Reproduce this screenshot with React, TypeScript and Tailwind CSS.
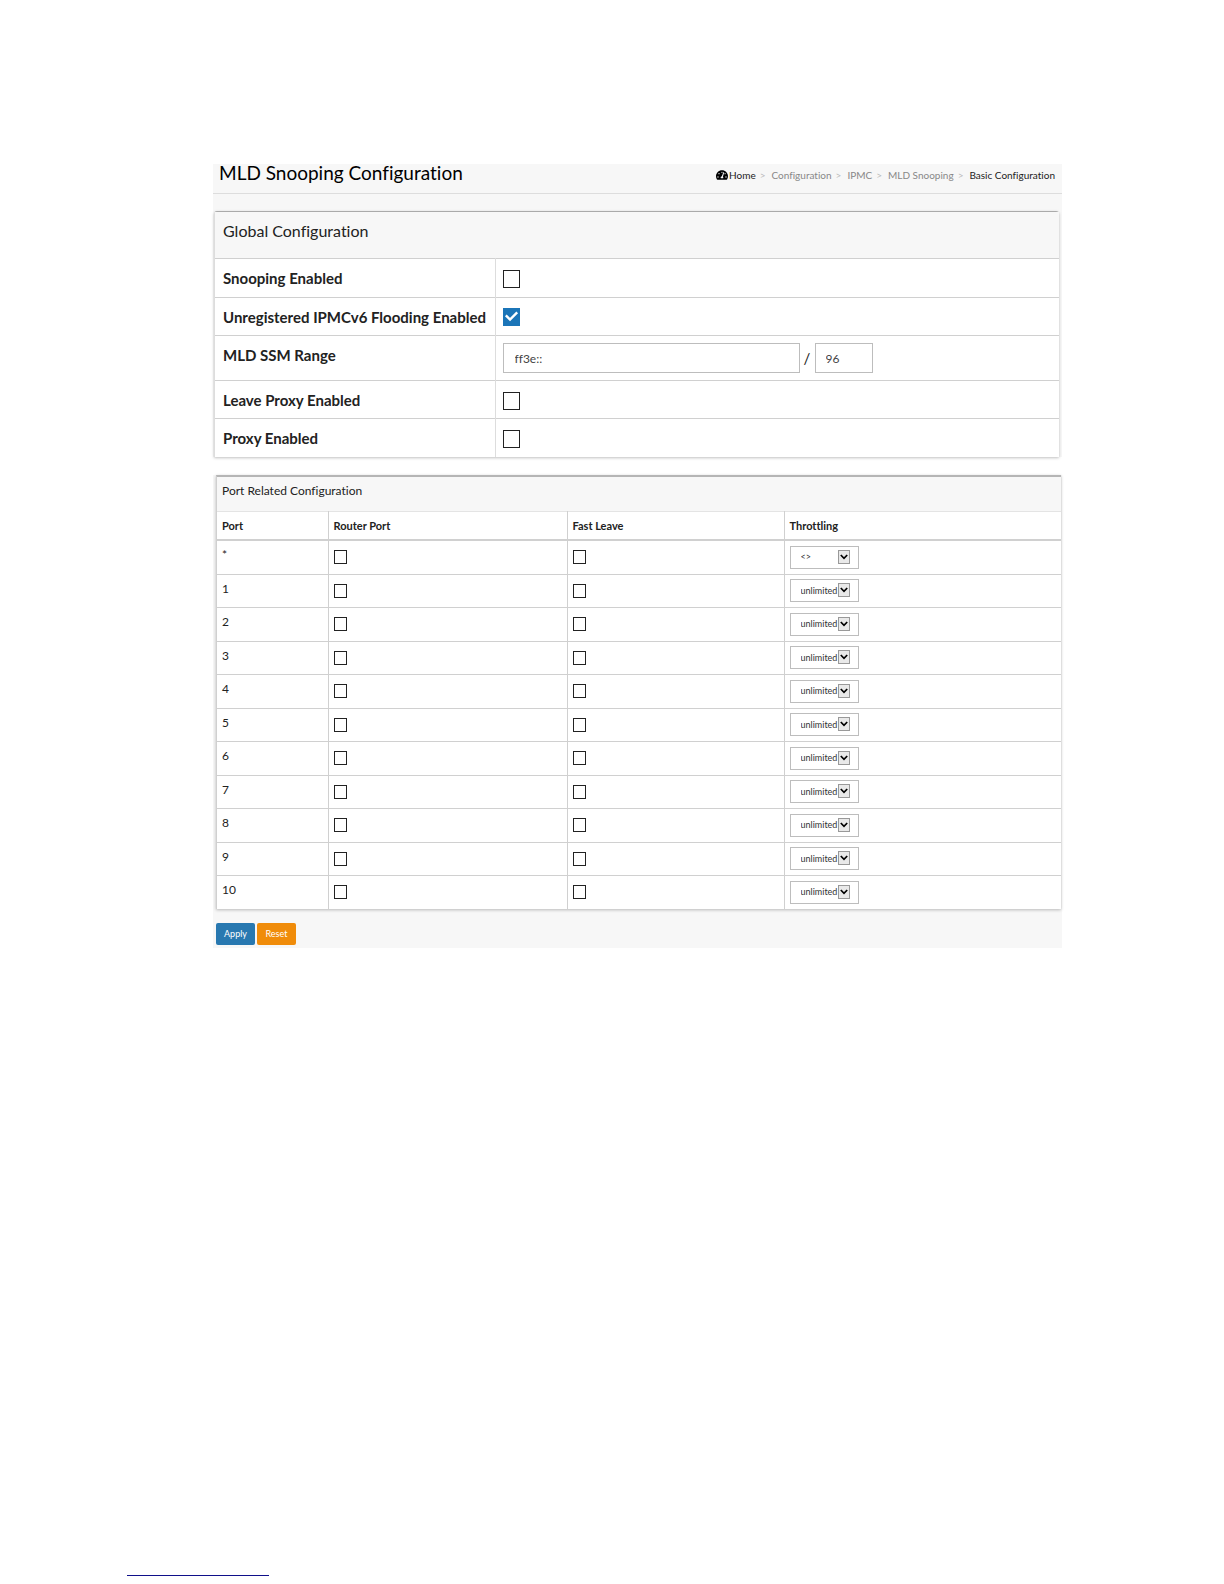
import { useState } from 'react';
import { FaTachometerAlt } from 'react-icons/fa';

const ports = ['*', '1', '2', '3', '4', '5', '6', '7', '8', '9', '10'];

const crumbs = ['Configuration', 'IPMC', 'MLD Snooping'];

function Checkbox({
  id,
  label,
  large = false,
  defaultChecked = false,
}: {
  id: string;
  label?: string;
  large?: boolean;
  defaultChecked?: boolean;
}) {
  return (
    <span className={`relative block ${large ? 'w-[17px] h-[18px]' : 'w-[13px] h-[14px]'}`}>
      <input
        id={id}
        type="checkbox"
        aria-label={label}
        defaultChecked={defaultChecked}
        className="peer block w-full h-full appearance-none border border-[#222] bg-white checked:border-[#1b75b8] checked:bg-[#1b75b8]"
      />
      <svg
        viewBox="0 0 17 18"
        className="pointer-events-none absolute inset-0 hidden h-full w-full peer-checked:block"
        fill="none"
        stroke="white"
        strokeWidth="2.4"
      >
        <path d="M2.8 7.3 L7 11.5 L14.2 4.3" />
      </svg>
    </span>
  );
}

function ThrottlingSelect({ port }: { port: string }) {
  const [value, setValue] = useState(port === '*' ? '<>' : 'unlimited');

  return (
    <div className="relative w-[69px]">
      <select
        aria-label={`Throttling for port ${port}`}
        value={value}
        onChange={(e) => setValue(e.target.value)}
        className="block h-[23px] w-full appearance-none border border-[#bdbdbd] bg-white pl-[10px] text-[9px] leading-[20px] text-[#333]"
      >
        {port === '*' && <option>{'<>'}</option>}
        <option>unlimited</option>
        {Array.from({ length: 10 }, (_, i) => (
          <option key={i}>{i + 1}</option>
        ))}
      </select>
      <span className="pointer-events-none absolute top-1 right-[9px] flex h-[14px] w-3 items-center justify-center border border-[#999] bg-[#e9e9e9]">
        <svg width="8" height="6" viewBox="0 0 8 6" fill="none" stroke="black" strokeWidth="1.7">
          <path d="M0.8 1 L4 4.3 L7.2 1" />
        </svg>
      </span>
    </div>
  );
}

function GlobalConfiguration() {
  const th = 'border-r border-[#ddd] pl-2 pt-2 text-left align-top font-bold leading-[22px]';
  const td = 'pl-[7px]';

  return (
    <section className="mr-[3px] ml-px rounded-t-[3px] border-t border-l border-t-[#aaa] border-l-[#ddd] shadow-[0_1px_3px_rgba(0,0,0,0.25)]">
      <h2 className="h-[46px] bg-[#f7f7f7] pt-[7px] pl-2 text-[16px] leading-[24px] text-[#222]">
        Global Configuration
      </h2>
      <table className="w-full table-fixed border-collapse bg-white text-[15px] text-[#222]">
        <colgroup>
          <col className="w-[280px]" />
          <col />
        </colgroup>
        <tbody>
          <tr className="h-[39px] border-t border-[#d0d0d0]">
            <th className={th}>
              <label htmlFor="snooping">Snooping Enabled</label>
            </th>
            <td className={`${td} pt-[2px]`}>
              <Checkbox id="snooping" large />
            </td>
          </tr>
          <tr className="h-[38px] border-t border-[#d0d0d0]">
            <th className={th}>
              <label htmlFor="flooding">Unregistered IPMCv6 Flooding Enabled</label>
            </th>
            <td className={td}>
              <Checkbox id="flooding" large defaultChecked />
            </td>
          </tr>
          <tr className="h-[45px] border-t border-[#d0d0d0]">
            <th className={th}>
              <label htmlFor="ssm-range">MLD SSM Range</label>
            </th>
            <td className={td}>
              <div className="flex items-center">
                <input
                  id="ssm-range"
                  type="text"
                  defaultValue="ff3e::"
                  className="h-[30px] w-[297px] border border-[#bdbdbd] px-[11px] text-[12px] text-[#444]"
                />
                <span className="w-[15px] text-center">/</span>
                <input
                  type="text"
                  aria-label="MLD SSM prefix length"
                  defaultValue="96"
                  className="h-[30px] w-[58px] border border-[#bdbdbd] px-[10px] text-[12px] text-[#444]"
                />
              </div>
            </td>
          </tr>
          <tr className="h-[38px] border-t border-[#d0d0d0]">
            <th className={th}>
              <label htmlFor="leave-proxy">Leave Proxy Enabled</label>
            </th>
            <td className={`${td} pt-[2px]`}>
              <Checkbox id="leave-proxy" large />
            </td>
          </tr>
          <tr className="h-[38px] border-t border-[#d0d0d0]">
            <th className={th}>
              <label htmlFor="proxy">Proxy Enabled</label>
            </th>
            <td className={`${td} pt-[2px]`}>
              <Checkbox id="proxy" large />
            </td>
          </tr>
        </tbody>
      </table>
    </section>
  );
}

function PortConfiguration() {
  const th = 'border-r border-[#d0d0d0] pt-px pl-[5px] text-left font-bold last:border-r-0';
  const td = 'border-r border-[#d0d0d0] pl-[5px] last:border-r-0';

  return (
    <section className="mr-px ml-[3px] border-t-2 border-l border-t-[#b5b5b5] border-l-[#d0d0d0] shadow-[0_1px_3px_rgba(0,0,0,0.25)]">
      <h2 className="h-[34px] bg-[#f7f7f7] pt-[5px] pl-[5px] text-[12px] leading-[18px] text-[#222]">
        Port Related Configuration
      </h2>
      <table className="w-full table-fixed border-collapse bg-white text-[12px] text-[#222]">
        <colgroup>
          <col className="w-[111px]" />
          <col className="w-[239px]" />
          <col className="w-[217px]" />
          <col />
        </colgroup>
        <thead>
          <tr className="h-[29px] border-t border-b-2 border-t-[#e4e4e4] border-b-[#d0d0d0] text-[11px]">
            <th className={th}>Port</th>
            <th className={th}>Router Port</th>
            <th className={th}>Fast Leave</th>
            <th className={th}>Throttling</th>
          </tr>
        </thead>
        <tbody>
          {ports.map((port) => (
            <tr key={port} className="h-[34px] border-b border-[#d0d0d0] even:h-[33px] last:border-b-0">
              <td className={`${td} pt-[5px] align-top leading-[18px]`}>{port}</td>
              <td className={td}>
                <Checkbox id={`router-${port}`} label={`Router port ${port}`} />
              </td>
              <td className={td}>
                <Checkbox id={`leave-${port}`} label={`Fast leave ${port}`} />
              </td>
              <td className={td}>
                <ThrottlingSelect port={port} />
              </td>
            </tr>
          ))}
        </tbody>
      </table>
    </section>
  );
}

export default function App() {
  return (
    <div className="flex min-h-screen flex-col bg-white pt-[164px] pr-[162px] pl-[213px] font-['Lato','Noto_Sans',sans-serif] [font-variant-ligatures:none]">
      <main>
        <div className="bg-[#f7f7f7]">
          <header className="flex h-[30px] justify-between border-b border-[#ddd] pr-[7px] pl-[6px]">
            <h1 className="text-[19px] leading-[18px] text-black">MLD Snooping Configuration</h1>
            <nav aria-label="Breadcrumb" className="flex h-[22px] items-center text-[10px] text-[#888]">
              <a href="#home" className="flex items-center text-[#222]">
                <FaTachometerAlt className="mr-px size-3 text-black" />
                Home
              </a>
              {crumbs.map((crumb) => (
                <span key={crumb} className="flex">
                  <span className="mr-[6px] ml-1 text-[#bbb]">&gt;</span>
                  {crumb}
                </span>
              ))}
              <span className="mr-[6px] ml-1 text-[#bbb]">&gt;</span>
              <span className="text-[#222]">Basic Configuration</span>
            </nav>
          </header>
          <div className="pt-[17px]">
            <GlobalConfiguration />
          </div>
        </div>
        <div className="mt-[18px] bg-[#f7f7f7] pb-[3px]">
          <PortConfiguration />
          <div className="mt-[14px] ml-[3px] flex gap-[2px] text-[9px] text-white">
            <button type="button" className="h-[22px] w-[39px] rounded-[2px] bg-[#2878b0]">
              Apply
            </button>
            <button type="button" className="h-[22px] w-[39px] rounded-[2px] bg-[#f08c0a]">
              Reset
            </button>
          </div>
        </div>
      </main>
      <footer className="mt-auto pb-2">
        <div className="-ml-[86px] w-[142px] border-b border-[#10108a]" />
      </footer>
    </div>
  );
}
